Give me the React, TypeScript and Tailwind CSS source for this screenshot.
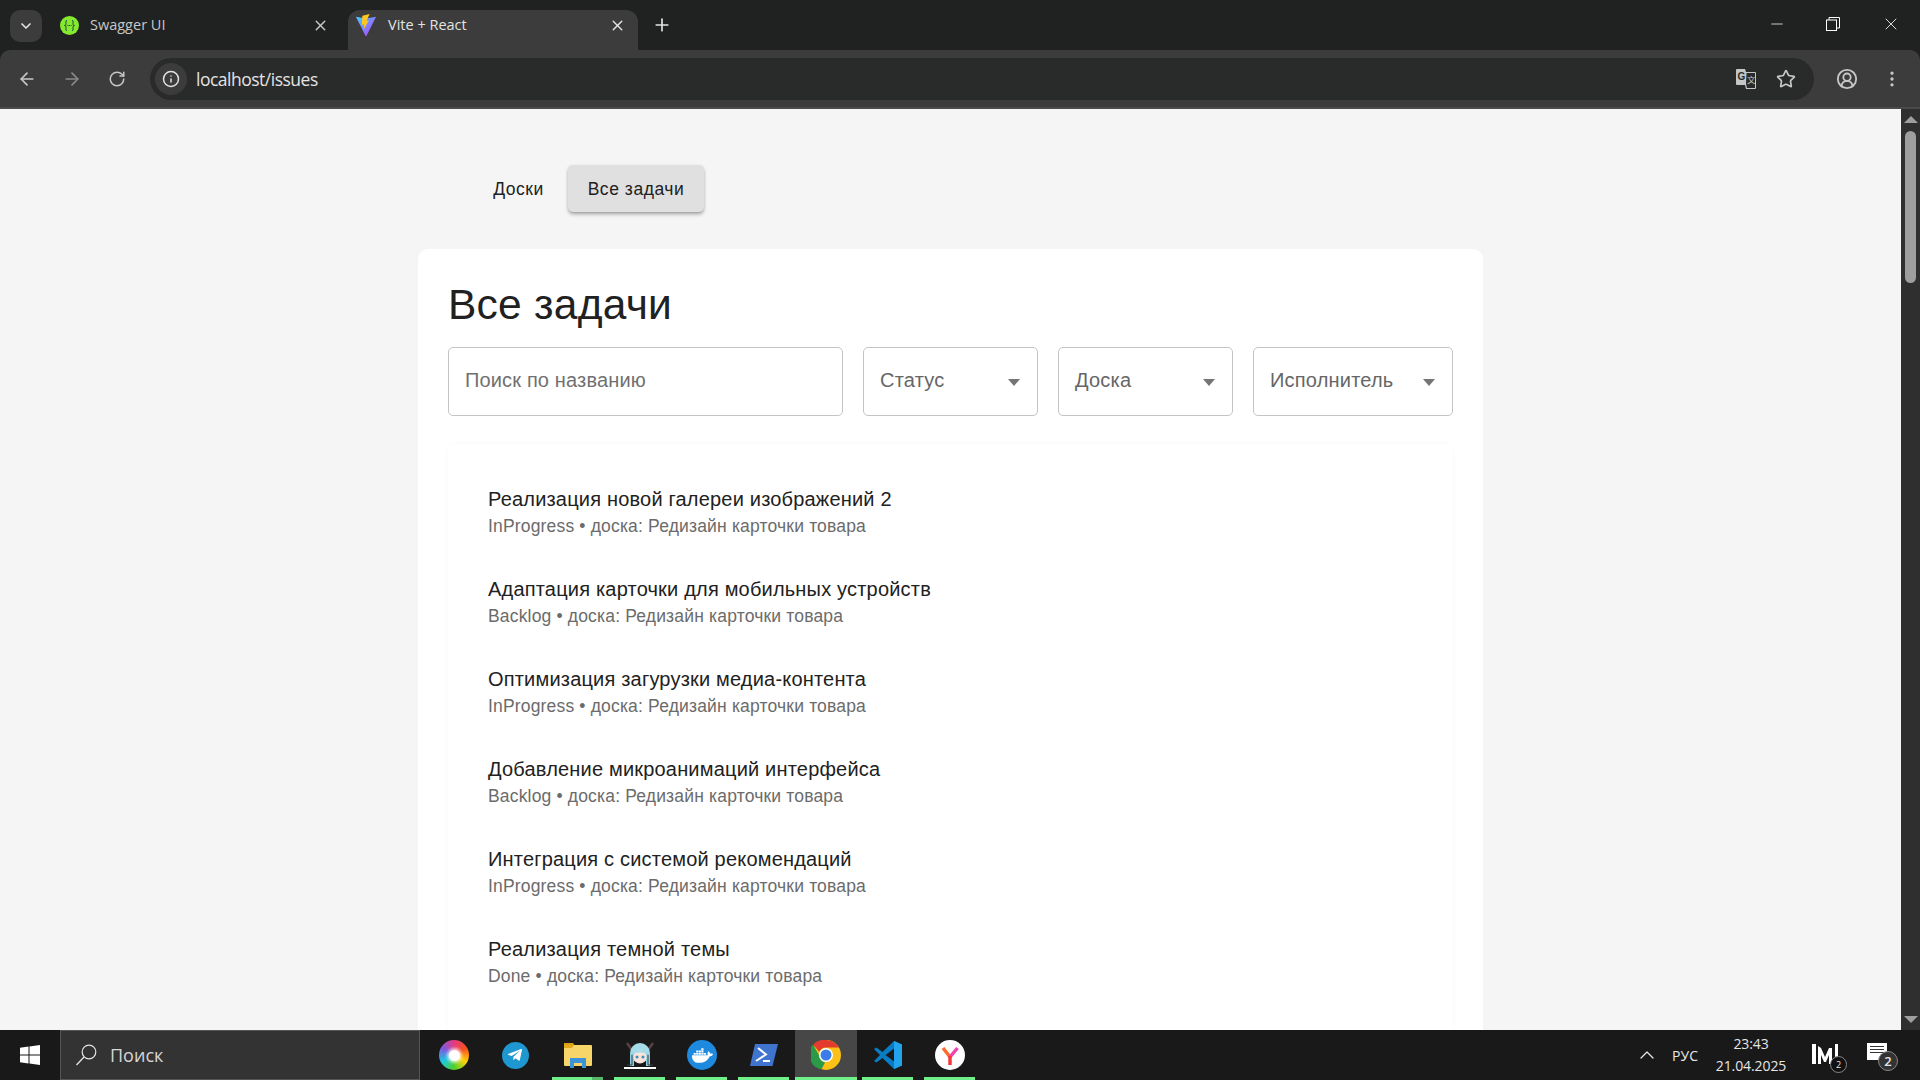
import React from "react";
import { ArrowLeft, ArrowRight, RotateCw, Info, Star, CircleUserRound, EllipsisVertical, X, Plus, ChevronDown, Minus, ChevronUp } from "lucide-react";
import { FaTelegramPlane, FaDocker } from "react-icons/fa";

const issues = [
  ["Реализация новой галереи изображений 2", "InProgress"],
  ["Адаптация карточки для мобильных устройств", "Backlog"],
  ["Оптимизация загурузки медиа-контента", "InProgress"],
  ["Добавление микроанимаций интерфейса", "Backlog"],
  ["Интеграция с системой рекомендаций", "InProgress"],
  ["Реализация темной темы", "Done"],
];

function Vite() {
  return (
    <svg width="22" height="24" viewBox="0 0 24 26">
      <defs>
        <linearGradient id="vg" x1="0" y1="0" x2="1" y2="1">
          <stop offset="0" stopColor="#41d1ff" />
          <stop offset="1" stopColor="#bd34fe" />
        </linearGradient>
      </defs>
      <path d="M1 4 12 6 23 4 12.500 25 11.500 25Z" fill="url(#vg)" />
      <path d="M16 1 8 3 7.500 13 10 12.500 9.500 18 15 8 12.500 8.500Z" fill="#ffc61f" />
    </svg>
  );
}

function Swagger() {
  return (
    <div className="w-[19px] h-[19px] rounded-full bg-[#85ea2d] flex items-center justify-center">
      <svg width="13" height="13" viewBox="0 0 13 13" fill="none" stroke="#173647" strokeWidth="1">
        <path d="M4 1.500C2.500 1.500 3 3 3 4.500S2.500 6.500 1.500 6.500C2.500 6.500 3 7 3 8.500S2.500 11.500 4 11.500" />
        <path d="M9 1.500C10.500 1.500 10 3 10 4.500S10.500 6.500 11.500 6.500C10.500 6.500 10 7 10 8.500S10.500 11.500 9 11.500" />
        <path d="M4.500 6.500h4" strokeDasharray="1 .7" />
      </svg>
    </div>
  );
}

function TranslateIcon() {
  return (
    <svg width="22" height="22" viewBox="0 0 22 22">
      <path d="M1 2a1 1 0 0 1 1-1h8l1 3h9a1 1 0 0 1 1 1v15a1 1 0 0 1-1 1h-9l-1-4H2a1 1 0 0 1-1-1Z" fill="#c4c7c5" />
      <path d="M11.500 5H20v15h-8l-1-4Z" fill="#292a2a" stroke="none" />
      <text x="2.500" y="12" fontSize="10" fontWeight="700" fill="#292a2a" fontFamily="Liberation Sans">G</text>
      <text x="12" y="15" fontSize="8.500" fill="#c4c7c5" fontFamily="Noto Sans CJK SC, sans-serif">文</text>
    </svg>
  );
}

function Rainbow() {
  return (
    <div className="relative w-[30px] h-[30px] rounded-full bg-[conic-gradient(#e6397f,#f4511e,#fdd20a,#4cd02b,#1ec8e0,#7a5be0,#e6397f)] flex items-center justify-center">
      <div className="w-[11px] h-[11px] rounded-full bg-white shadow-[0_0_3px_2px_rgba(255,255,255,0.7)]" />
    </div>
  );
}

function Folder() {
  return (
    <svg width="30" height="26" viewBox="0 0 30 26">
      <path d="M1 1h9l2 3h-11Z" fill="#d8a214" />
      <rect x="1" y="3" width="28" height="21" rx="1" fill="#f8d568" />
      <path d="M1 3h10l-2 3H1Z" fill="#e3ab1c" />
      <path d="M7 26V16h16v10h-4v-5h-8v5Z" fill="#3c93d8" />
    </svg>
  );
}

function Anime() {
  return (
    <svg width="32" height="28" viewBox="0 0 32 28">
      <path d="M3 2l5 7M29 2l-5 7" stroke="#5a4042" strokeWidth="2.500" />
      <circle cx="16" cy="12" r="10" fill="#a6dcea" />
      <rect x="6" y="12" width="4" height="13" fill="#8fcfe4" />
      <rect x="22" y="12" width="4" height="13" fill="#8fcfe4" />
      <path d="M3 24h5V14M29 24h-5V14" stroke="#3c3c3c" fill="none" />
      <circle cx="16" cy="16" r="6.500" fill="#fbe3da" />
      <path d="M9 13c4-5 10-5 14 0-5-2-9-2-14 0Z" fill="#a6dcea" />
      <circle cx="13" cy="16" r="1.500" fill="#3a8fb8" />
      <circle cx="19" cy="16" r="1.500" fill="#3a8fb8" />
      <rect x="0" y="26" width="32" height="2" fill="#fff" />
    </svg>
  );
}

function PowerShell() {
  return (
    <svg width="30" height="24" viewBox="0 0 30 24">
      <path d="M6 1h23l-5.500 22H1Z" fill="#3f74cf" />
      <path d="M9 5l8 6.500L7 18" fill="none" stroke="#fff" strokeWidth="2" />
      <path d="M14 18h7" stroke="#fff" strokeWidth="2" />
    </svg>
  );
}

function Chrome() {
  return (
    <svg width="30" height="30" viewBox="0 0 30 30">
      <circle cx="15" cy="15" r="15" fill="#fbc116" />
      <path d="M15 0a15 15 0 0 1 13 7.500H15a7.500 7.500 0 0 0-6.800 4.300L2 4.600A15 15 0 0 1 15 0Z" fill="#e33b2e" />
      <path d="M2 4.600l6.500 11.500a7.500 7.500 0 0 0 5.500 6.400L10.500 29.300A15 15 0 0 1 2 4.600Z" fill="#2a9a46" />
      <circle cx="15" cy="15" r="7" fill="#fff" />
      <circle cx="15" cy="15" r="5.500" fill="#3b7de8" />
    </svg>
  );
}

function VSCode() {
  return (
    <svg width="30" height="30" viewBox="0 0 30 30">
      <path d="M21 1 9.500 12 3.500 7.500 1 9l6 6-6 6 2.500 1.500 6-4.500L21 29l8-3.500v-21Z" fill="#0a7cc4" />
      <path d="M21 1l8 3.500v21L21 29Z" fill="#22a4ec" />
      <path d="M21 8.500 12.500 15l8.500 6.500Z" fill="#1a1a1a" />
    </svg>
  );
}

function Yandex() {
  return (
    <svg width="30" height="30" viewBox="0 0 30 30">
      <circle cx="15" cy="15" r="15" fill="#fff" />
      <path d="M8 8l7 9" stroke="#fc6a2c" strokeWidth="3.500" fill="none" />
      <path d="M22.500 8 15 17" stroke="#f442a8" strokeWidth="3.500" fill="none" />
      <path d="M15 16v9" stroke="#f23a3a" strokeWidth="3.500" />
    </svg>
  );
}

function MLogo() {
  return (
    <svg width="28" height="23" viewBox="0 0 28 23" fill="#fff">
      <path d="M0 0h4v20H0Z" />
      <path d="M6 2l3 2 4 9 4-9h3v16h-3V11l-3 7h-2L9 11v9H6Z" />
      <path d="M23 0h3v13h-3Z" />
    </svg>
  );
}

function TaskbarApp({ children, active, running, split }: { children: React.ReactNode; active?: boolean; running?: boolean; split?: boolean }) {
  return (
    <div className={`relative w-[62px] h-full flex items-center justify-center ${active ? "bg-[#474747]" : ""}`}>
      {children}
      {running && (
        <div className={`absolute bottom-0 h-[3px] flex ${active ? "left-0 right-0" : "left-[5px] right-[6px]"}`}>
          <div className="flex-1 bg-[#6ff088]" />
          {split && <div className="w-[11px] bg-[#55b868]" />}
        </div>
      )}
    </div>
  );
}

function Select({ label, width }: { label: string; width: string }) {
  return (
    <div className={`${width} h-[69px] shrink-0 border border-[#c4c4c4] rounded-[5px] flex items-center justify-between pl-[16px] pr-[17px] text-[20px] tracking-[0.2px] text-[#666666]`}>
      <span className="mb-[2px]">{label}</span>
      <svg width="12" height="7" viewBox="0 0 12 7" className="mt-[2px]"><path d="M0 0h12L6 7Z" fill="#757575" /></svg>
    </div>
  );
}

export default function App() {
  return (
    <div className="w-screen h-screen overflow-hidden flex flex-col bg-[#202221] font-['Liberation_Sans',sans-serif]">
      {/* Tab strip */}
      <div className="h-[50px] shrink-0 flex items-end pl-[10px] text-[14.500px] font-['Open_Sans',sans-serif] text-[#e3e3e3] relative">
        <div className="self-start mt-[10px] w-[32px] h-[32px] rounded-[10px] bg-[#3c3c3c] flex items-center justify-center">
          <ChevronDown size={16} strokeWidth={2.500} />
        </div>
        <div className="w-[306px] h-[40px] flex items-center pl-[18px] pr-[19px] pb-[10px] text-[#c7c7c7]">
          <Swagger />
          <span className="ml-[11px] flex-1">Swagger UI</span>
          <X size={17} strokeWidth={2} />
        </div>
        <div className="w-[290px] h-[40px] rounded-t-[12px] bg-[#3c3c3c] flex items-center pl-[7px] pr-[12px] pb-[10px]">
          <Vite />
          <span className="ml-[11px] flex-1">Vite + React</span>
          <X size={17} strokeWidth={2} />
        </div>
        <div className="ml-[14px] h-[40px] flex items-center pb-[10px]">
          <Plus size={20} strokeWidth={2} />
        </div>
        <div className="ml-auto h-full flex items-center pb-[2px] text-white">
          <Minus size={18} strokeWidth={1} className="mr-[40px]" />
          <svg width="14" height="14" viewBox="0 0 14 14" fill="none" stroke="#fff" className="mr-[41px]">
            <rect x="0.500" y="3" width="10" height="10.500" />
            <path d="M3 3V.500h10.500V11H11" />
          </svg>
          <X size={20} strokeWidth={1} className="mr-[19px]" />
        </div>
      </div>

      {/* Toolbar */}
      <div className="h-[59px] shrink-0 bg-[#3c3c3c] rounded-t-[10px] flex items-center border-b-2 border-[#4a4a4a] text-[#c7c7c7]">
        <ArrowLeft size={20} className="ml-[17px]" />
        <ArrowRight size={20} className="ml-[25px] text-[#8a8a8a]" />
        <RotateCw size={18} className="ml-[26px]" />
        <div className="ml-[24px] w-[1664px] h-[42px] rounded-full bg-[#292a2a] flex items-center pl-[5px] pr-[18px]">
          <div className="w-[32px] h-[32px] rounded-full bg-[#3c3c3c] flex items-center justify-center text-[#e3e3e3]">
            <Info size={18} />
          </div>
          <span className="ml-[9px] mt-[2px] flex-1 text-[17.500px] text-[#e3e3e3] font-['Open_Sans',sans-serif] tracking-[-0.500px]">localhost/issues</span>
          <TranslateIcon />
          <Star size={20} className="ml-[19px]" />
        </div>
        <CircleUserRound size={22} className="ml-[22px]" />
        <EllipsisVertical size={20} className="ml-[24px]" />
      </div>

      {/* Viewport */}
      <div className="flex-1 min-h-0 flex">
        <main className="flex-1 min-w-0 bg-[#f5f5f5] overflow-hidden">
          <nav className="h-[140px] flex items-start pt-[56px] pl-[473px] gap-[4px] text-[17.500px] tracking-[0.550px] text-[#212121]">
            <div className="w-[91px] h-[47px] flex items-center justify-center pt-[1px]">Доски</div>
            <div className="w-[136px] h-[47px] flex items-center justify-center pt-[1px] bg-[#e0e0e0] rounded-[5px] shadow-[0_3px_4px_-1px_rgba(0,0,0,0.3),0_1px_3px_rgba(0,0,0,0.15)]">Все задачи</div>
          </nav>
          <section className="ml-[418px] w-[1065px] bg-white rounded-t-[10px] pt-[30px] px-[30px] pb-[40px]">
            <h1 className="text-[42.500px] leading-[52.500px] tracking-[0.250px] text-[#212121]">Все задачи</h1>
            <div className="mt-[15px] flex gap-[20px]">
              <div className="w-[395px] h-[69px] shrink-0 border border-[#c4c4c4] rounded-[5px] flex items-center pl-[16px] pb-[2px] text-[20px] tracking-[0.150px] text-[#707070]">Поиск по названию</div>
              <Select label="Статус" width="w-[175px]" />
              <Select label="Доска" width="w-[175px]" />
              <Select label="Исполнитель" width="w-[200px]" />
            </div>
            <ul className="mt-[28px] pt-[22px] pb-[90px] w-[1005px] rounded-[5px] shadow-[0_0_4px_rgba(0,0,0,0.03)]">
              {issues.map(([title, status]) => (
                <li key={title} className="h-[90px] pl-[40px] pt-[18px]">
                  <div className="text-[20px] leading-[30px] tracking-[0.190px] text-[#212121]">{title}</div>
                  <div className="text-[17.500px] leading-[25px] tracking-[0.170px] text-[#6b6b6b]">{status} • доска: Редизайн карточки товара</div>
                </li>
              ))}
            </ul>
          </section>
        </main>
        <div className="w-[19px] shrink-0 bg-[#2f2f2f] flex flex-col items-center pt-[7px]">
          <div className="w-0 h-0 border-x-[7px] border-x-transparent border-b-[7px] border-b-[#9e9e9e]" />
          <div className="mt-[8px] w-[11px] h-[152px] rounded-full bg-[#9e9e9e]" />
          <div className="mt-auto mb-[7px] w-0 h-0 border-x-[7px] border-x-transparent border-t-[7px] border-t-[#9e9e9e]" />
        </div>
      </div>

      {/* Taskbar */}
      <div className="h-[50px] shrink-0 bg-[#191919] flex items-center text-white">
        <div className="w-[60px] h-full flex items-center justify-center">
          <svg width="20" height="20" viewBox="0 0 20 20" fill="#fff">
            <path d="M0 2.800 8.500 1.600V9.500H0ZM9.500 1.500 20 0V9.500H9.500ZM0 10.500H8.500V18.400L0 17.200ZM9.500 10.500H20V20L9.500 18.500Z" />
          </svg>
        </div>
        <div className="w-[360px] h-full bg-[#333333] border border-[#555555] flex items-center pl-[14px] text-[18px] text-[#d6d6d6] font-['Open_Sans',sans-serif]">
          <svg width="22" height="22" viewBox="0 0 22 22" fill="none" stroke="#e6e6e6" strokeWidth="1.200">
            <circle cx="14" cy="8" r="6.800" />
            <path d="M9 13 1.500 21" />
          </svg>
          <span className="ml-[13px]">Поиск</span>
        </div>
        <div className="ml-[3px] h-full flex">
          <TaskbarApp><Rainbow /></TaskbarApp>
          <TaskbarApp>
            <div className="w-[27px] h-[27px] mr-[2px] rounded-full bg-[#1f97d1] flex items-center justify-center text-white"><FaTelegramPlane size={16} /></div>
          </TaskbarApp>
          <TaskbarApp running split><Folder /></TaskbarApp>
          <TaskbarApp running><Anime /></TaskbarApp>
          <TaskbarApp running>
            <div className="w-[30px] h-[30px] rounded-full bg-[#1d8ae0] flex items-center justify-center text-white"><FaDocker size={21} /></div>
          </TaskbarApp>
          <TaskbarApp running><PowerShell /></TaskbarApp>
          <TaskbarApp running active><Chrome /></TaskbarApp>
          <TaskbarApp running><VSCode /></TaskbarApp>
          <TaskbarApp running><Yandex /></TaskbarApp>
        </div>
        <div className="ml-auto h-full flex items-center text-[14px] text-[#e6e6e6] font-['Open_Sans',sans-serif]">
          <ChevronUp size={24} strokeWidth={1.250} />
          <span className="ml-[13px]">РУС</span>
          <div className="ml-[13px] w-[80px] text-center leading-[22px] tracking-[-0.100px]">
            <div>23:43</div>
            <div>21.04.2025</div>
          </div>
          <div className="relative ml-[21px] w-[34px] h-[30px] flex items-center">
            <MLogo />
            <div className="absolute right-[-1px] bottom-[-3px] w-[17px] h-[17px] rounded-full bg-[#111] border border-[#888] text-[9px] leading-[15px] text-center">2</div>
          </div>
          <div className="relative ml-[21px] mr-[31px] w-[22px] h-[24px]">
            <div className="w-[20px] h-[17px] bg-white flex flex-col gap-[2px] px-[3px] pt-[3px]">
              <div className="h-px bg-[#333]" /><div className="h-px bg-[#333]" /><div className="h-px bg-[#333]" />
            </div>
            <div className="absolute right-[-9px] bottom-[-4px] w-[20px] h-[20px] rounded-full bg-[#333] border border-[#888] text-[13px] leading-[18px] text-center font-semibold">2</div>
          </div>
        </div>
      </div>
    </div>
  );
}
